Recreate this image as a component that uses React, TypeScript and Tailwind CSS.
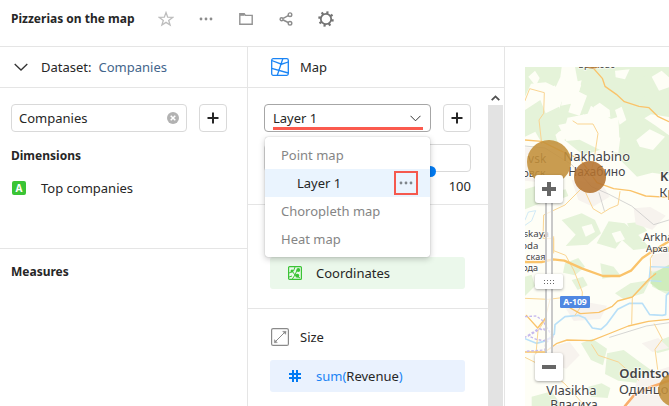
import type { ReactNode } from "react";

const FONT = "font-['Noto_Sans','Open_Sans',sans-serif]";

function IconButton({ label, children }: { label: string; children: ReactNode }) {
  return (
    <button type="button" aria-label={label} className="flex h-7 w-7 items-center justify-center text-[#8c8c8c]">
      {children}
    </button>
  );
}

function AddButton({ label }: { label: string }) {
  return (
    <button
      type="button"
      aria-label={label}
      className="flex h-7 w-7 shrink-0 items-center justify-center rounded border border-[#d9d9d9] bg-white text-[#262626]"
    >
      <svg width="12" height="12" viewBox="0 0 12 12" fill="none" stroke="currentColor" strokeWidth="2" aria-hidden="true">
        <path d="M6 .5v11M.5 6h11" />
      </svg>
    </button>
  );
}

function Dots() {
  return (
    <svg width="14" height="4" viewBox="0 0 14 4" fill="currentColor" aria-hidden="true">
      <circle cx="2" cy="2" r="1.4" />
      <circle cx="7" cy="2" r="1.4" />
      <circle cx="12" cy="2" r="1.4" />
    </svg>
  );
}

function Gear() {
  return (
    <svg width="18" height="18" viewBox="0 0 18 18" fill="none" stroke="#747474" aria-hidden="true">
      <circle cx="9" cy="9" r="5.2" strokeWidth="1.8" />
      <g strokeWidth="2.2">
        <path d="M9 1.2v2.6M9 14.2v2.6M1.2 9h2.6M14.2 9h2.6" transform="rotate(12 9 9)" />
        <path d="M9 1.2v2.6M9 14.2v2.6M1.2 9h2.6M14.2 9h2.6" transform="rotate(57 9 9)" />
      </g>
    </svg>
  );
}

function Header() {
  return (
    <header className="flex h-[47px] items-center border-b border-[#e5e5e5] pb-2 pl-[11px]">
      <h1 className="w-[141px] whitespace-nowrap text-xs font-bold">Pizzerias on the map</h1>
      <div className="flex gap-3">
        <IconButton label="Add to favourites">
          <svg width="16" height="16" viewBox="0 0 16 16" fill="none" stroke="#bdbdbd" strokeWidth="1.3" aria-hidden="true">
            <path d="M8 1.6l1.7 4.6 4.9.2-3.9 3 1.4 4.7L8 11.4l-4.1 2.7 1.4-4.7-3.9-3 4.9-.2z" />
          </svg>
        </IconButton>
        <IconButton label="More actions">
          <Dots />
        </IconButton>
        <IconButton label="Move to folder">
          <svg width="14" height="12" viewBox="0 0 14 12" fill="none" stroke="#939393" strokeWidth="1.4" aria-hidden="true">
            <path d="M.8 11.2V.8h4.4l1.2 1.6h6.8v8.8z" />
            <path d="M1 1.8h4.5" strokeWidth="2" />
          </svg>
        </IconButton>
        <IconButton label="Share">
          <svg width="14" height="14" viewBox="0 0 14 14" fill="none" stroke="#8c8c8c" strokeWidth="1.4" aria-hidden="true">
            <circle cx="2.6" cy="7.2" r="1.5" />
            <circle cx="11" cy="2.7" r="1.8" />
            <circle cx="11" cy="11.3" r="1.8" />
            <path d="M4.2 6.4l5-2.7M4.2 8l5 2.5" />
          </svg>
        </IconButton>
        <IconButton label="Settings">
          <Gear />
        </IconButton>
      </div>
    </header>
  );
}

function DatasetPanel() {
  return (
    <aside className="w-[248px] shrink-0 border-r border-[#e5e5e5]">
      <div className="flex h-[41px] items-center border-b border-[#e5e5e5] pl-[14px]">
        <svg width="14" height="8" viewBox="0 0 14 8" fill="none" stroke="#333" strokeWidth="1.3" aria-hidden="true">
          <path d="M.7 1L7 7l6.3-6" />
        </svg>
        <span className="ml-[13px]">Dataset:</span>
        <a href="#companies" className="ml-[7px] text-[#43658b]">Companies</a>
      </div>
      <div className="flex gap-3 pt-4 pl-[11px]">
        <div className="relative w-44">
          <input
            type="text"
            aria-label="Search fields"
            defaultValue="Companies"
            className="h-7 w-full rounded border border-[#d9d9d9] bg-white pr-7 pl-[7px] outline-none"
          />
          <button type="button" aria-label="Clear search" className="absolute top-2 right-2">
            <svg width="12" height="12" viewBox="0 0 12 12" aria-hidden="true">
              <circle cx="6" cy="6" r="6" fill="#b2b2b2" />
              <path d="M3.7 3.7l4.6 4.6M8.3 3.7l-4.6 4.6" stroke="#fff" strokeWidth="1.5" />
            </svg>
          </button>
        </div>
        <AddButton label="Add field" />
      </div>
      <section className="h-[117px] border-b border-[#e5e5e5] pt-[14px] pl-[11px]">
        <h2 className="text-xs leading-5 font-bold">Dimensions</h2>
        <div className="mt-3 flex items-center">
          <span className="ml-px flex h-[14px] w-[14px] items-center justify-center rounded-[2px] bg-[#3ac435] text-[10px] leading-none font-bold text-white">
            A
          </span>
          <span className="ml-[15px]">Top companies</span>
        </div>
      </section>
      <section className="pt-[13px] pl-[11px]">
        <h2 className="text-xs leading-5 font-bold">Measures</h2>
      </section>
    </aside>
  );
}

function LayerMenu() {
  return (
    <ul className="absolute top-[33px] right-px left-px z-10 rounded-[3px] bg-white py-1 text-[#858585] shadow-[0_2px_6px_rgba(0,0,0,0.22),0_0_1px_rgba(0,0,0,0.35)]">
      <li className="flex h-7 items-center px-4">Point map</li>
      <li className="flex h-7 items-center bg-[#eaf4fe] pr-3 pl-8 text-[#262626]">
        Layer 1
        <button
          type="button"
          aria-label="Layer actions"
          className="ml-auto flex h-6 w-6 items-center justify-center border-2 border-[#f5594e] text-[#7f868c]"
        >
          <Dots />
        </button>
      </li>
      <li className="flex h-7 items-center px-4">Choropleth map</li>
      <li className="flex h-7 items-center px-4">Heat map</li>
    </ul>
  );
}

function SettingsPanel() {
  return (
    <main className="flex w-[257px] shrink-0 flex-col border-r border-[#e5e5e5]">
      <div className="flex h-[41px] items-center border-b border-[#e5e5e5] pl-[23px]">
        <svg width="18" height="18" viewBox="0 0 18 18" fill="none" stroke="#1a84f5" strokeWidth="1.3" aria-hidden="true">
          <rect x=".7" y=".7" width="16.6" height="16.6" rx="1.5" />
          <path d="M.7 2.5l9.8 3.700 6.800-2.200M.7 10.300l16.600 4.700M11.800.7L6.300 17.300" />
        </svg>
        <span className="ml-[11px]">Map</span>
      </div>
      <div className="flex flex-1">
        <div className="min-w-0 flex-1">
          <section className="border-b border-[#e5e5e5] pt-4 pr-[17px] pb-2 pl-4">
            <div className="flex gap-3">
              <div className="relative min-w-0 flex-1">
                <select
                  aria-label="Layer"
                  className="block h-7 w-full appearance-none rounded border border-[#a6a6a6] bg-white px-2 outline-none"
                >
                  <option>Layer 1</option>
                </select>
                <svg className="pointer-events-none absolute top-[11px] right-[10px]" width="11" height="7" viewBox="0 0 11 7" fill="none" stroke="#333" aria-hidden="true">
                  <path d="M.5.8l5 5 5-5" />
                </svg>
                <span className="pointer-events-none absolute right-2 bottom-0.5 left-[9px] h-[3px] bg-[#fb5a4e]" />
                <LayerMenu />
              </div>
              <AddButton label="Add layer" />
            </div>
            <div className="relative mt-3">
              <input type="text" aria-label="Layer opacity" className="block h-7 w-full rounded border border-[#d9d9d9] bg-white px-2 outline-none" />
              <input
                type="range"
                aria-label="Opacity slider"
                min="0"
                max="100"
                defaultValue="82"
                className="absolute -bottom-1 left-0 h-[10px] w-full appearance-none bg-transparent [&::-webkit-slider-thumb]:h-[11px] [&::-webkit-slider-thumb]:w-[11px] [&::-webkit-slider-thumb]:appearance-none [&::-webkit-slider-thumb]:rounded-full [&::-webkit-slider-thumb]:bg-[#027bf3]"
              />
            </div>
            <div className="mt-1 text-right">100</div>
          </section>
          <section className="border-b border-[#e5e5e5] pt-[52px] pr-[23px] pb-[19px] pl-[22px]">
            <div className="flex h-8 items-center rounded-[3px] bg-[#ebf8eb] pl-[18px]">
              <svg width="14" height="14" viewBox="0 0 14 14" fill="none" stroke="#3ac435" aria-hidden="true">
                <rect x=".6" y=".6" width="12.8" height="12.8" rx="1" strokeWidth="1.2" />
                <path d="M1 7l3.5-1.500L7 9l5 3M7 1L5.500 5M9 4L7 9l-3 4.500M1 11l3-1" />
                <g fill="#3ac435" stroke="none">
                  <circle cx="4" cy="5" r="1.5" />
                  <circle cx="10.3" cy="4" r="1.9" />
                  <circle cx="9.3" cy="9.7" r="2" />
                </g>
              </svg>
              <span className="ml-[14px]">Coordinates</span>
            </div>
          </section>
          <section className="pt-[19px] pr-[23px] pl-[22px]">
            <div className="flex h-[18px] items-center pl-px">
              <svg width="18" height="18" viewBox="0 0 18 18" fill="none" stroke="#8a8a8a" aria-hidden="true">
                <rect x=".6" y=".6" width="16.8" height="16.8" rx="1.5" strokeWidth="1.2" />
                <path d="M4 14L14 4" />
                <path d="M11.500 3.300h3.700L14.700 6.500zM3.300 11.500v3.400l3.200-.3z" fill="#8a8a8a" strokeWidth=".3" />
              </svg>
              <span className="ml-[11px]">Size</span>
            </div>
            <div className="mt-[14px] flex h-8 items-center rounded-[3px] bg-[#eaf2fe] pl-[19px]">
              <svg width="12" height="12" viewBox="0 0 12 12" fill="none" stroke="#027bf3" strokeWidth="2" aria-hidden="true">
                <path d="M4 0v12M8 0v12M0 4h12M0 8h12" />
              </svg>
              <span className="ml-[15px] text-[#1a84f5]">
                sum(<span className="text-[#262626]">Revenue</span>)
              </span>
            </div>
          </section>
        </div>
        <div className="mr-px flex w-[15px] flex-col items-center pt-[7px]">
          <svg width="9" height="6" viewBox="0 0 9 6" fill="none" stroke="#505050" strokeWidth="1.8" aria-hidden="true">
            <path d="M.7 5.200L4.500 1.400l3.800 3.800" />
          </svg>
          <div className="mt-1 w-full flex-1 bg-[#e3e3e3]" />
        </div>
      </div>
    </main>
  );
}

const forests = [
  "M0 21h110l-4 30-14 30-30-14-44 4L0 110zM0 150l46-30 16 40 40-20 20 54-30 30-50-14-42 20z",
  "M150 21h100l-6 30-24 14-50 12-12-14z",
  "M236 21h196v150l-54-8-30 18-50-16-40 12-60-40-10 24-60 12-28-18 10-30 40 6 20-60z",
  "M100 150l28 22-10 36-28 12 10 34-50-6-20-34z",
  "M118 240l22-24 60-6 56 36 60-10 36 40 80-46v76l-90-24-40 14-66-30-60 20z",
  "M0 388l34-10 26 14-10 36-50 20z",
  "M330 60l50-20 52 14v80l-58-34-34 22z",
  "M280 170l50-14 60 40 42 30v120l-50-8-46 12-50-50z",
  "M100 392l22-4 8 20-22 8z",
  "M110 480l60-20 40 20 18 40-40 34-66 4 30-34z",
  "M215 550l36-66 48 6 40 34 36 40-50 6-34-30-20 26z",
  "M120 610l40-16 20 26-30 26-36-8z",
  "M226 610l40 10 20 26-54 10z",
  "M140 660l34-10 14 26-30 14z",
  "M270 700l46-30 60-10-20 40-60 18z",
  "M374 636l58-30v100l-50-26z",
  "M0 650l20-6 10 34-30 30z",
  "M168 850l34-14 44 30-12 50-36-16z",
  "M246 880l50-10 60 44 50 36-60 20-66-8-40-20z",
  "M190 980l40-10 26 14-8 30-50-4z",
  "M20 1010l60-16 30 44H20z",
  "M380 850l52-20v40l-36 10z",
  "M306 490l40-4 20 26-40 20z",
];

const clearings = [
  "M120 75l50-14-8 34 24 12-22 60-34-10 8-26-30 6z",
  "M206 140l18-12 30 22 2 22-24 0-24-16z",
  "M100 195l40-8 36-24 46 50 64 20-6 46-56-10-60-30-40 4z",
  "M10 50l20-18 14 22-12 24z",
  "M270 32l44-4-14 30-28-6z",
  "M60 100l30-24 10 40-30 30z",
  "M334 240l40-32 46 22-36 40-40-10z",
  "M270 150l20-10 14 40-20 14z",
  "M380 50l30-18 22 20v30l-30 10z",
  "M170 500l30-8 10 24-28 14z",
  "M260 520l26-8 14 26-26 10z",
];

const urban = [
  "M0 262l110 6 30 60-40 44-100-10z",
  "M140 360l90 10 24 40-50 30-44-20z",
  "M326 445l50-4 46 26-40 42-50-16z",
  "M116 735l70-8 60 10-20 40-80 6z",
  "M74 860l60-14 30 40-40 40-50-16z",
  "M380 585l52-10v50l-50 10z",
  "M350 850l50-16 32 30-50 12z",
  "M340 950l92-30v118H310z",
];

const minorRoads = [
  "M0 122l14-36 44 12-2 62-14 20 8 70",
  "M144 183l14 9h46l15 28-12 80-10 40",
  "M170 385l-50 50-64 30-2 70h32v44",
  "M182 398l22 48 25 15 26-16 24-10 6-40",
  "M86 530v42l36 14 24 44 26 66-2 40-20 30",
  "M0 715l70 3 50-6M75 718l-16 64-20 30-6 70",
  "M432 560l-40 10-16 26 2 60-56 56-2 80",
  "M388 792l24 46-22 30 8 60",
  "M0 892l60 30 60 50 60 66",
  "M200 854l20 32 60 20 60 54",
];

function MapPane() {
  return (
    <div className="relative min-w-0 flex-1 overflow-hidden bg-[#fefef6]">
      <svg
        className="absolute inset-0 h-full w-full"
        viewBox="0 21 432 1017"
        preserveAspectRatio="xMinYMin slice"
        role="img"
        aria-label="Map of pizzerias"
      >
        <g fill="#e5f3d9">{forests.map((d) => <path key={d} d={d} />)}</g>
        <g fill="#fefef6">{clearings.map((d) => <path key={d} d={d} />)}</g>
        <g fill="#f7f3ee">{urban.map((d) => <path key={d} d={d} />)}</g>
        <path d="M384 640l48-26v80l-30-4-26-20z" fill="#cfecbc" />
        <g fill="none" strokeLinejoin="round" strokeLinecap="round">
          <g stroke="#b9e0f8">
            <path d="M0 480l10-24 22-4-12 30-20 14" strokeWidth="2" />
            <path d="M432 622l-56-2-4 42 36 2" strokeWidth="4" />
            <path d="M0 836l34 14 30-8 24-20 2-28 30-24 40-4 20 8 22 30 26 4 16-14 34-46 36-18h38l22 34 38 2 10-2 2-58 10-10" strokeWidth="5" />
          </g>
          <path d="M0 258l60 6 80 50 60 66 50 22 70 36 66 56 46-14M222 398l16 54M254 832l110-34 68-10" stroke="#c1c1c1" strokeWidth="2" />
          <g stroke="#fad592" strokeWidth="3">{minorRoads.map((d) => <path key={d} d={d} />)}</g>
          <g stroke="#fac36a">
            <path d="M202 21l30 34 8 24 34 24 24 22 44 14 30 4 26 26 34 16" strokeWidth="4" />
            <path d="M0 240l50 4 56 28 60 26 50 70 50 18 50 6 46 16 70 4 14-14" strokeWidth="4" />
            <path d="M0 606h50l34-8 34 4 54 24 62 22h50l34-16 34-38 30-20 50-30" strokeWidth="7" />
            <path d="M0 876h60l36-26 30-10 74 2 50-20 60-24 60-14 62-6" strokeWidth="4" />
            <path d="M120 735l46 26 56-4 40-18 16-16 44-12 50-54 20-16" strokeWidth="4" />
            <path d="M4 766l34 38 24-30" strokeWidth="4" />
          </g>
          <path d="M300 1038l30-36 50-22 52-18" stroke="#f9ae6c" strokeWidth="8" />
          <path d="M0 770l34-2 22 16 10 24-26-2-40 26M10 828l34-20 28 4 14 18-30 12-22-4zM64 800l18 30-20 20-2 20-60 4" stroke="#c6b9ee" strokeWidth="4" strokeDasharray="8 5" strokeLinecap="butt" />
        </g>

        <g fill="#444" stroke="#fff" strokeOpacity=".7" strokeWidth="5" paintOrder="stroke" fontSize="36">
          <text x="160" y="23" fontSize="28">Брёхово</text>
          <text x="64" y="308" textAnchor="end">vsk</text>
          <text x="62" y="350" textAnchor="end" fontSize="32">овск</text>
          <text x="115" y="304" fontSize="39">Nakhabino</text>
          <text x="130" y="348" fontSize="36">Нахабино</text>
          <text x="405" y="363" fontSize="39" fontWeight="600">Krasnogorsk</text>
          <text x="403" y="411" fontSize="39">Красногорск</text>
          <text x="72" y="530" textAnchor="end" fontSize="29">skaya</text>
          <text x="40" y="566" textAnchor="end" fontSize="29">oda</text>
          <text x="61" y="600" textAnchor="end" fontSize="27">ская</text>
          <text x="39" y="634" textAnchor="end" fontSize="27">ода</text>
          <text x="354" y="543" fontSize="33">Arkhangelskoye</text>
          <text x="363" y="577" fontSize="29">Архангельское</text>
          <text x="64" y="1005" fontSize="39">Vlasikha</text>
          <text x="76" y="1047" fontSize="36">Власиха</text>
          <text x="283" y="954" fontSize="39" fontWeight="600">Odintsovo</text>
          <text x="282" y="1001" fontSize="39">Одинцово</text>
        </g>

        <rect x="105" y="708" width="90" height="36" rx="4" fill="#5088e2" />
        <text x="150" y="735" textAnchor="middle" fontSize="26" fontWeight="700" fill="#fff">A-109</text>

        <g fillOpacity=".88">
          <circle cx="202" cy="-16" r="42" fill="#bd8138" />
          <circle cx="72" cy="306" r="66" fill="#c38f3a" />
          <circle cx="195" cy="351" r="48" fill="#b4722f" />
          <circle cx="450" cy="990" r="50" fill="#c38f3a" />
        </g>
      </svg>

      <div className="absolute top-[108px] left-[10px] flex w-7 flex-col items-center">
        <button type="button" aria-label="Zoom in" className="z-10 flex h-7 w-7 items-center justify-center rounded-[3px] bg-white shadow-[0_1px_3px_rgba(0,0,0,0.35)]">
          <svg width="14" height="14" viewBox="0 0 14 14" fill="none" stroke="#666" strokeWidth="4" aria-hidden="true">
            <path d="M7 0v14M0 7h14" />
          </svg>
        </button>
        <div className="flex h-[150px] w-[8px] flex-col items-center border-x-2 border-[#c9c9c9] bg-white/70 pt-[71px]">
          <button type="button" aria-label="Zoom level" className="flex h-[15px] w-7 shrink-0 items-center justify-center rounded-[2px] bg-white shadow-[0_1px_3px_rgba(0,0,0,0.35)]">
            <svg width="10" height="4" viewBox="0 0 10 4" fill="#666" aria-hidden="true">
              <path d="M0 0h1v1H0zM3 0h1v1H3zM6 0h1v1H6zM9 0h1v1H9zM0 3h1v1H0zM3 3h1v1H3zM6 3h1v1H6zM9 3h1v1H9z" />
            </svg>
          </button>
        </div>
        <button type="button" aria-label="Zoom out" className="z-10 flex h-7 w-7 items-center justify-center rounded-[3px] bg-white shadow-[0_1px_3px_rgba(0,0,0,0.35)]">
          <svg width="14" height="4" viewBox="0 0 14 4" fill="#666" aria-hidden="true">
            <path d="M0 0h14v4H0z" />
          </svg>
        </button>
      </div>
    </div>
  );
}

export default function App() {
  return (
    <div className={`flex min-h-screen flex-col bg-white text-[13px] leading-5 text-[#262626] ${FONT}`}>
      <Header />
      <div className="flex flex-1">
        <DatasetPanel />
        <SettingsPanel />
        <div className="flex min-w-0 flex-1 pt-5 pl-5">
          <MapPane />
        </div>
      </div>
    </div>
  );
}
